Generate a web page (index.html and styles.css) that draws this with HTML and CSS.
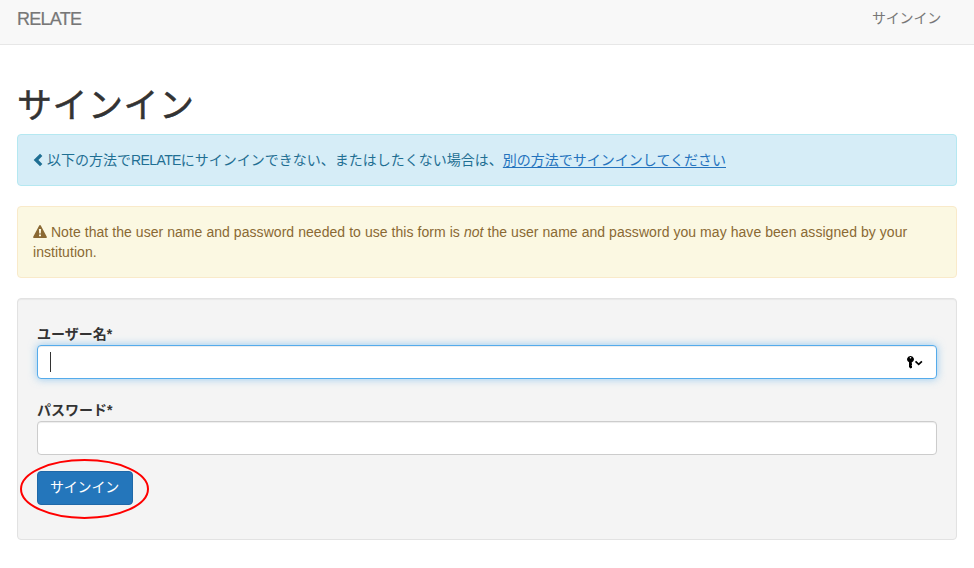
FILE: index.html
```html
<!DOCTYPE html>
<html lang="ja">
<head>
<meta charset="utf-8">
<title>RELATE</title>
<link rel="stylesheet" href="styles.css">
</head>
<body>
<nav class="navbar"><a class="brand">RELATE</a><a class="nav-link">サインイン</a></nav>
<main class="container">
<h1>サインイン</h1>
<div class="alert info"><svg class="chevron" viewBox="0 0 10 14"><path d="M8.200 1.800 3 7l5.200 5.200" fill="none" stroke="currentColor" stroke-width="3.300"/></svg><span class="info-text">以下の方法で<span class="latin">RELATE</span>にサインインできない、またはしたくない場合は、</span><a class="info-link">別の方法でサインインしてください</a></div>
<div class="alert warning"><svg class="warn-icon" viewBox="0 0 14 13"><path fill="currentColor" fill-rule="evenodd" d="M6.200.5Q7-.5 7.800.5L13.900 12Q14 13 13 13H1Q0 13 .1 12zM5.900 4l.3 4.500h1.600l.3-4.500zM6 9.500v1.800h2V9.500z"/></svg> Note that the user name and password needed to use this form is <em>not</em> the user name and password you may have been assigned by your<br>institution.</div>
<form class="well">
<label>ユーザー名*</label>
<div class="input focused"><span class="caret"></span><svg class="key" viewBox="0 0 16 14"><path fill="#000" fill-rule="evenodd" d="M3.500.9A3.300 3.300 0 0 0 2 7.200V12l1.500 1.500L5 12.700V11l-.7-.5.7-.5V8.500l-.5-.5.5-.8A3.300 3.300 0 0 0 3.500.9zm0 1.100a.8.8 0 1 1 0 1.600.8.8 0 0 1 0-1.600z"/><path d="m8.500 6.300 3.200 3 3.200-3" fill="none" stroke="#000" stroke-width="1.700"/></svg></div>
<label>パスワード*</label>
<div class="input"></div>
<div class="action"><button type="button">サインイン</button><svg class="ring" viewBox="0 0 130 60"><ellipse cx="64.500" cy="30" rx="63.500" ry="28.900" fill="none" stroke="#f00" stroke-width="2"/></svg></div>
</form>
</main>
</body>
</html>
```
FILE: styles.css
```css
*{box-sizing:border-box}
body{margin:0;background:#fff;color:#333;font:14px/20px "Liberation Sans","Noto Sans CJK JP",sans-serif}
.navbar{height:45px;padding:8px 33px 0 17px;background:#f8f8f8;border-bottom:1px solid #e7e7e7;display:flex;justify-content:space-between;color:#777}
.brand{font-size:18px;line-height:22px;letter-spacing:-.75px;-webkit-text-stroke:.2px #777}
.nav-link{letter-spacing:-.2px}
.container{padding:41px 17px 0}
h1{margin:0 0 8px;font-size:35px;line-height:40px;font-weight:400;letter-spacing:.5px;-webkit-text-stroke:.5px #333}
.alert{padding:15px;border:1px solid;border-radius:4px;margin-bottom:20px}
.info{height:52px;display:flex;align-items:center;background:#d6edf7;border-color:#b5e8f1;color:#1f6f93;white-space:nowrap}
.chevron{width:10px;height:14px;margin-right:4px}
.latin{letter-spacing:-.6px}
.info-link{color:#2473bd;text-decoration:underline;text-underline-offset:2px}
.warning{height:72px;background:#fbf8e2;border-color:#f9eaca;color:#8a6933;letter-spacing:.056px}
.warn-icon{width:14px;height:13px;vertical-align:-1px}
.well{height:242px;padding:25px 19px;background:#f4f4f4;border:1px solid #e2e2e2;border-radius:4px;box-shadow:inset 0 1px 1px rgba(0,0,0,.05)}
label{display:block;font-weight:700;height:21px}
.input{height:34px;background:#fff;border:1px solid #ccc;border-radius:4px;box-shadow:inset 0 1px 1px rgba(0,0,0,.075);display:flex;align-items:center;justify-content:space-between;padding:0 13px 0 12px;margin-bottom:16px}
.focused{border-color:#55abeb;box-shadow:inset 0 1px 1px rgba(0,0,0,.075),0 0 8px rgba(85,171,235,.6);margin-bottom:21px}
.caret{width:1px;height:20px;background:#333}
.key{width:16px;height:14px}
.action{position:relative;width:96px}
button{display:block;width:96px;height:34px;border:1px solid #1f68a8;border-radius:4px;background:#2476bb;color:#fff;font:inherit;letter-spacing:-.2px;padding:0 1px 2px 0}
.ring{position:absolute;left:-17px;top:-12px;width:130px;height:60px}
```
